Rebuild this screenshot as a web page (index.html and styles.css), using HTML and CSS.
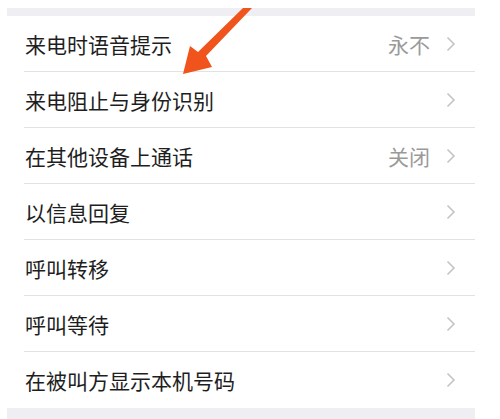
FILE: index.html
```html
<!DOCTYPE html>
<html lang="zh-CN">
<head>
    <meta charset="UTF-8">
    <meta name="viewport" content="width=device-width, initial-scale=1.0">
    <title>电话设置</title>
    <link rel="stylesheet" href="styles.css">
</head>
<body>
    <div class="page">
        <div class="screen">
            <ul class="settings-group">
                <li class="settings-row">
                    <span class="row-title">来电时语音提示</span>
                    <span class="row-value">永不</span>
                    <svg class="chevron" viewBox="0 0 10 16"><path d="M1.5 1.5 L8 8 L1.5 14.5"/></svg>
                </li>
                <li class="settings-row">
                    <span class="row-title">来电阻止与身份识别</span>
                    <svg class="chevron" viewBox="0 0 10 16"><path d="M1.5 1.5 L8 8 L1.5 14.5"/></svg>
                </li>
                <li class="settings-row">
                    <span class="row-title">在其他设备上通话</span>
                    <span class="row-value">关闭</span>
                    <svg class="chevron" viewBox="0 0 10 16"><path d="M1.5 1.5 L8 8 L1.5 14.5"/></svg>
                </li>
                <li class="settings-row">
                    <span class="row-title">以信息回复</span>
                    <svg class="chevron" viewBox="0 0 10 16"><path d="M1.5 1.5 L8 8 L1.5 14.5"/></svg>
                </li>
                <li class="settings-row">
                    <span class="row-title">呼叫转移</span>
                    <svg class="chevron" viewBox="0 0 10 16"><path d="M1.5 1.5 L8 8 L1.5 14.5"/></svg>
                </li>
                <li class="settings-row">
                    <span class="row-title">呼叫等待</span>
                    <svg class="chevron" viewBox="0 0 10 16"><path d="M1.5 1.5 L8 8 L1.5 14.5"/></svg>
                </li>
                <li class="settings-row">
                    <span class="row-title">在被叫方显示本机号码</span>
                    <svg class="chevron" viewBox="0 0 10 16"><path d="M1.5 1.5 L8 8 L1.5 14.5"/></svg>
                </li>
            </ul>
        </div>

        <!-- annotation arrow drawn over the list -->
        <svg class="pointer-arrow" viewBox="0 0 500 419">
            <path d="M243 8 L252 8 L206 56 L212 67 L183 74 L190 46 L198 52 Z"/>
        </svg>
    </div>
</body>
</html>
```

FILE: styles.css
```css
* {
    margin: 0;
    padding: 0;
    box-sizing: border-box;
}

body {
    font-family: "Noto Sans CJK SC", "Noto Sans", sans-serif;
    background: #fff;
    width: 500px;
    height: 419px;
    overflow: hidden;
}

.page {
    position: relative;
    height: 419px;
    padding: 8px 0 0 7px;
}

.screen {
    width: 468px;
    height: 411px;
    background: #efeff3;
    padding-top: 8px;
}

.settings-group {
    list-style: none;
    background: #fff;
}

.settings-row {
    display: flex;
    align-items: center;
    height: 56px;
    margin-left: 17px;
    padding-right: 19px;
    border-bottom: 1px solid #e2e2e4;
}

.settings-row:last-child {
    border-bottom: none;
}

.row-title {
    flex: 1;
    padding-left: 1px;
    font-size: 21px;
    color: #1e1e1e;
}

.row-value {
    font-size: 21px;
    color: #9a9a9a;
    margin-right: 16px;
}

.chevron {
    width: 10px;
    height: 16px;
    fill: none;
    stroke: #c4c4c8;
    stroke-width: 1.6;
}

.pointer-arrow {
    position: absolute;
    top: 0;
    left: 0;
    width: 500px;
    height: 419px;
    fill: #f1531c;
}
```
